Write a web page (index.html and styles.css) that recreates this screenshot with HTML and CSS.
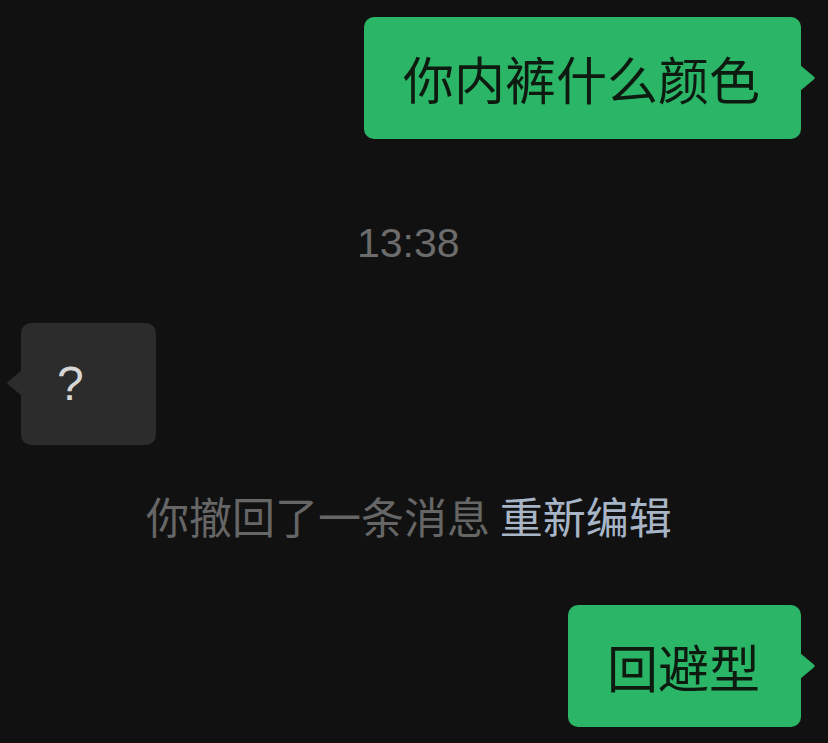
FILE: index.html
```html
<!DOCTYPE html>
<html lang="zh-CN">
<head>
    <meta charset="UTF-8">
    <meta name="viewport" content="width=device-width, initial-scale=1.0">
    <title>聊天</title>
    <link rel="stylesheet" href="styles.css">
</head>
<body>
    <div class="chat">
        <div class="row row-right">
            <div class="bubble bubble-me">你内裤什么颜色</div>
        </div>

        <div class="time">13:38</div>

        <div class="row row-left">
            <div class="bubble bubble-other">?</div>
        </div>

        <div class="notice">你撤回了一条消息 <span class="re-edit">重新编辑</span></div>

        <div class="row row-right row-last">
            <div class="bubble bubble-me">回避型</div>
        </div>
    </div>
</body>
</html>
```

FILE: styles.css
```css
body {
    margin: 0;
    padding: 0;
    background-color: #111111;
    font-family: "Noto Sans CJK SC", "Liberation Sans", sans-serif;
}

.chat {
    width: 828px;
    height: 743px;
    overflow: hidden;
    padding-top: 17px;
    box-sizing: border-box;
    display: flex;
    flex-direction: column;
}

.row {
    display: flex;
}

.row-right {
    justify-content: flex-end;
    padding-right: 27px;
}

.row-left {
    justify-content: flex-start;
    padding-left: 21px;
    margin-top: 56px;
}

.row-last {
    margin-top: 64px;
}

.bubble {
    position: relative;
    height: 122px;
    display: flex;
    align-items: center;
    box-sizing: border-box;
    border-radius: 10px;
    font-size: 51px;
    line-height: 1;
}

.bubble-me {
    background-color: #2bb566;
    color: #0d1a10;
    padding: 0 41px 0 39px;
}

.bubble-me::after {
    content: "";
    position: absolute;
    right: -14px;
    top: 48px;
    width: 15px;
    height: 26px;
    background-color: #2bb566;
    clip-path: polygon(0 0, 88% 42%, 100% 50%, 88% 58%, 0 100%);
}

.bubble-other {
    width: 135px;
    background-color: #2c2c2c;
    color: #d6d6d6;
    padding-left: 36px;
    font-family: "Liberation Sans", sans-serif;
    font-size: 48px;
}

.bubble-other::before {
    content: "";
    position: absolute;
    left: -14px;
    top: 47px;
    width: 15px;
    height: 26px;
    background-color: #2c2c2c;
    clip-path: polygon(100% 0, 12% 42%, 0 50%, 12% 58%, 100% 100%);
}

.time {
    margin-top: 80px;
    padding-left: 357px;
    font-family: "Liberation Sans", sans-serif;
    font-size: 41px;
    line-height: 48px;
    color: #6c6c6c;
}

.notice {
    margin-top: 44px;
    padding-left: 146px;
    font-size: 43px;
    line-height: 52px;
    color: #666666;
}

.re-edit {
    color: #a7b5c6;
}
```
